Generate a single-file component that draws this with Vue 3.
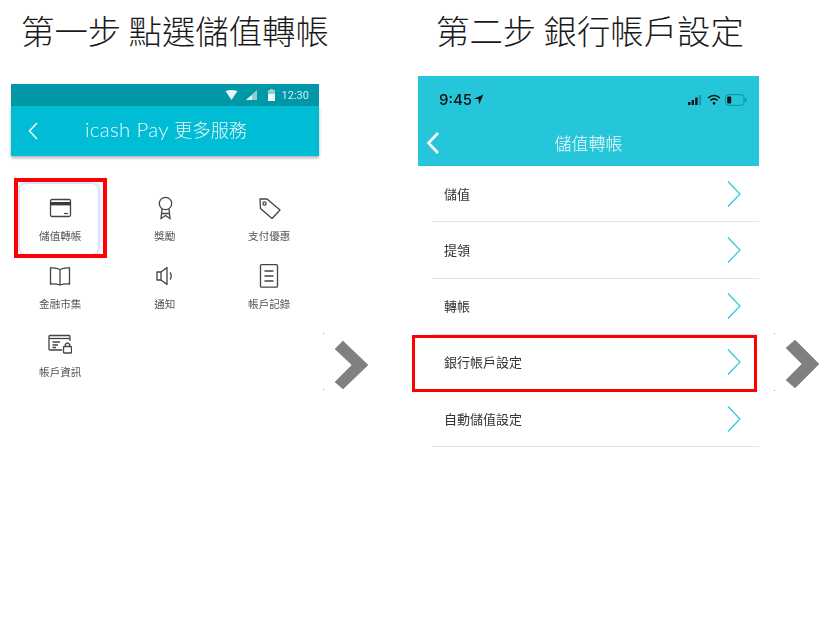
<script setup>
const services = [
  { label: '儲值轉帳', icon: 'card', active: true },
  { label: '獎勵', icon: 'medal' },
  { label: '支付優惠', icon: 'tag' },
  { label: '金融市集', icon: 'book' },
  { label: '通知', icon: 'speaker' },
  { label: '帳戶記錄', icon: 'doc' },
  { label: '帳戶資訊', icon: 'lock' },
]
const rows = [
  { label: '儲值' },
  { label: '提領' },
  { label: '轉帳' },
  { label: '銀行帳戶設定', active: true },
  { label: '自動儲值設定' },
]
</script>

<template>
  <div class="page">
    <section class="col col-one">
      <h1 class="title">第一步 點選儲值轉帳</h1>
      <div class="phone">
        <div class="android-status">
          <svg width="13" height="10" viewBox="0 0 13 10"><path d="M0.5 1 Q6.5 -1 12.5 1 L6.5 10 Z" fill="#e6f6f8" /></svg>
          <svg class="sig" width="12" height="10" viewBox="0 0 12 10"><path d="M0 10 L11 0 V10 Z" fill="#8fd0d8" /><path d="M0 10 L6 5 V10 Z" fill="#e6f6f8" /></svg>
          <svg class="bat" width="7" height="12" viewBox="0 0 7 12"><path d="M2 0 H5 V1 H7 V12 H0 V1 H2 Z" fill="#8fd0d8" /><rect y="5" width="7" height="7" fill="#f2fbfc" /></svg>
          <span class="clock">12:30</span>
        </div>
        <div class="android-head">
          <svg class="back" width="12" height="20" viewBox="0 0 12 20"><path d="M10 2 L2.5 10 L10 18" fill="none" stroke="#eefafc" stroke-width="1.6" /></svg>
          <span class="android-title">icash Pay <span class="android-cjk">更多服務</span></span>
        </div>
        <div class="grid">
          <div v-for="s in services" :key="s.label" class="cell" :class="{ active: s.active }">
            <svg class="ico" width="24" height="24" viewBox="0 0 24 24" fill="none" stroke="#444" stroke-width="1.3">
              <template v-if="s.icon === 'card'">
                <rect x="2.5" y="3.5" width="20" height="17" rx="1.5" />
                <rect x="2.5" y="6" width="20" height="3.4" fill="#3a3a3a" stroke="none" />
                <path d="M16 17.5 H20" stroke-width="1.2" />
              </template>
              <template v-if="s.icon === 'medal'">
                <circle cx="12.5" cy="7.5" r="6.2" />
                <path d="M9 13 L8 22.5 L12.5 19.5 L17 22.5 L16 13 M8.5 17.5 H16.5" />
              </template>
              <template v-if="s.icon === 'tag'">
                <path d="M3 3 H10 L23 14 L15 22.5 L3.5 12.5 Z" stroke-linejoin="round" />
                <circle cx="7.5" cy="7.5" r="1.6" />
              </template>
              <template v-if="s.icon === 'book'">
                <path d="M12 5.5 Q8 3.5 2.5 4 V20 Q8 19.5 12 21 Q16 19.5 21.5 20 V4 Q16 3.5 12 5.5 V21" />
              </template>
              <template v-if="s.icon === 'speaker'">
                <path d="M4 8 H8 L14 3.5 V20.5 L8 16 H4 Z M8 8 V16" stroke-linejoin="round" />
                <path d="M17 8.5 Q19.5 12 17 15.5" />
              </template>
              <template v-if="s.icon === 'doc'">
                <rect x="3.5" y="0.7" width="17" height="22.5" rx="1.2" />
                <path d="M7.5 7 H16.5 M7.5 12 H16.5 M7.5 17 H16.5" />
              </template>
              <template v-if="s.icon === 'lock'">
                <path d="M22 9 V4.5 Q22 3.5 21 3.5 H2 Q1 3.5 1 4.5 V17 Q1 18 2 18 H14" />
                <path d="M1 6.5 H22" />
                <path d="M4.5 10 H12 M4.5 13 H10 M4.5 15.5 H8" />
                <rect x="15.5" y="14.5" width="8" height="6.5" rx="0.8" fill="#fff" />
                <path d="M17.3 14.5 V12.5 Q19.5 9.5 21.7 12.5 V14.5" />
              </template>
            </svg>
            <span class="cell-label">{{ s.label }}</span>
          </div>
        </div>
      </div>
    </section>

    <div class="gap gap-one">
      <svg width="48" height="60" viewBox="0 0 48 60">
        <path class="soft" d="M21 9 L46 33 L21 57 L13 50 L30 33 L13 17 Z" fill="#808080" stroke="#808080" stroke-width="0.6" stroke-linejoin="round" />
        <rect x="1" y="1" width="1" height="1" fill="#999" />
        <rect x="1" y="57" width="1" height="1" fill="#999" />
      </svg>
    </div>

    <section class="col col-two">
      <h1 class="title title-two">第二步 銀行帳戶設定</h1>
      <div class="ios-head">
        <div class="ios-status">
          <span class="ios-time">9:45</span>
          <svg class="ios-loc" width="11" height="11" viewBox="0 0 10 10"><path d="M9.5 0.5 L0.5 4.5 H5 L5.5 9.5 Z" fill="#111" /></svg>
          <span class="ios-spacer"></span>
          <svg width="15" height="10" viewBox="0 0 15 10"><rect x="0" y="7" width="2.4" height="3" fill="#111" /><rect x="3.6" y="5" width="2.4" height="5" fill="#111" /><rect x="7.2" y="2.5" width="2.4" height="7.5" fill="#111" /><rect x="10.8" y="0" width="2.4" height="10" fill="#1a97a8" /></svg>
          <svg width="14" height="11" viewBox="0 0 14 11" fill="none" stroke="#111" stroke-width="1.6"><path d="M1 4 Q7 -1 13 4" /><path d="M3.5 6.3 Q7 3.3 10.5 6.3" /><path d="M6 8.5 L7 9.8 L8 8.5" fill="#111" /></svg>
          <svg width="22" height="12" viewBox="0 0 22 12"><rect x="0.5" y="0.7" width="18.5" height="10.6" rx="2.6" fill="none" stroke="#1a8c9c" /><rect x="2.2" y="2.5" width="4" height="7" rx="1" fill="#111" /><rect x="20" y="4" width="1.3" height="4" fill="#1a8c9c" /></svg>
        </div>
        <div class="ios-nav">
          <svg class="ios-back" width="14" height="24" viewBox="0 0 14 24"><path d="M12 2 L2.5 12 L12 22" fill="none" stroke="#fff" stroke-width="2.6" /></svg>
          <span class="ios-title">儲值轉帳</span>
        </div>
      </div>
      <ul class="list">
        <li v-for="r in rows" :key="r.label" class="row" :class="{ active: r.active }">
          <span class="row-label">{{ r.label }}</span>
          <svg width="14" height="28" viewBox="0 0 14 28"><path d="M1 1.5 L13 14 L1 26.5" fill="none" stroke="#2ec7dc" stroke-width="1.2" /></svg>
        </li>
      </ul>
    </section>

    <div class="gap gap-two">
      <svg width="48" height="60" viewBox="0 0 48 60">
        <path class="soft" d="M22 8 L46 32 L22 56 L13 48 L29 32 L13 16 Z" fill="#808080" stroke="#808080" stroke-width="0.6" stroke-linejoin="round" />
        <rect x="1" y="1" width="1" height="1" fill="#999" />
        <rect x="1" y="58" width="1" height="1" fill="#999" />
      </svg>
    </div>
  </div>
</template>

<style scoped>
.page {
  width: 823px;
  height: 633px;
  overflow: hidden;
  display: flex;
  padding-left: 11px;
  box-sizing: border-box;
  background: #fff;
  font-family: "Noto Sans CJK TC", "Noto Sans", sans-serif;
}
.col-one { width: 308px; flex: none; }
.col-two { width: 341px; flex: none; }
.title {
  margin: 0 0 0 10px;
  height: 64px;
  line-height: 60px;
  font-size: 33.4px;
  font-weight: 300;
  color: #1a1a1a;
  white-space: nowrap;
}
.title-two { margin-left: 18px; margin-bottom: 12px; }
.col-one .title { margin-bottom: 20px; }

.android-status {
  height: 22px;
  background: #0097a7;
  display: flex;
  align-items: center;
  justify-content: flex-end;
  padding-right: 10px;
  filter: blur(0.4px);
}
.sig { margin-left: 8px; }
.bat { margin-left: 10px; }
.clock {
  margin-left: 7px;
  font: 400 11px Roboto, sans-serif;
  color: #cdeef2;
}
.android-head {
  height: 50px;
  background: #00bcd4;
  box-shadow: 0 2px 3px rgba(0, 0, 0, 0.3);
  display: flex;
  align-items: center;
  position: relative;
}
.back { margin-left: 16px; filter: blur(0.3px); }
.android-title {
  margin-left: 46px;
  margin-bottom: 5px;
  font: 300 20.5px Lato, "Noto Sans CJK TC", sans-serif;
  color: #eefafc;
  letter-spacing: 0.3px;
  white-space: nowrap;
  filter: blur(0.3px);
}
.android-cjk { font-size: 18.2px; letter-spacing: 0; }
.grid {
  margin: 40px 0 0 -3px;
  display: grid;
  grid-template-columns: repeat(3, 104.5px);
  grid-auto-rows: 68px;
}
.cell {
  position: relative;
  display: flex;
  flex-direction: column;
  align-items: center;
}
.ico { position: relative; z-index: 1; filter: blur(0.35px); }
.cell-label {
  position: relative;
  z-index: 1;
  margin-top: 8px;
  font-size: 10.6px;
  line-height: 16px;
  color: #555;
  white-space: nowrap;
  filter: blur(0.3px);
}
.cell.active::before {
  content: "";
  position: absolute;
  left: 12px;
  top: -12px;
  width: 78px;
  height: 70px;
  background: #fff;
  border-radius: 6px;
  box-shadow: 0 0 5px 1px rgba(130, 170, 255, 0.65);
}
.cell.active::after {
  content: "";
  position: absolute;
  left: 6px;
  top: -18px;
  width: 93px;
  height: 80px;
  box-sizing: border-box;
  border: 4px solid #f00;
  z-index: 2;
}

.ios-head { background: #26c6da; height: 90px; }
.ios-status {
  height: 47px;
  display: flex;
  align-items: center;
  gap: 4px;
  padding: 0 12px 0 21px;
  filter: blur(0.3px);
}
.ios-time {
  font: 500 15px Inter, sans-serif;
  color: #111;
}
.ios-loc { margin-left: -3px; }
.ios-spacer { flex: 1; }
.ios-nav {
  height: 43px;
  position: relative;
  display: flex;
  align-items: center;
  justify-content: center;
}
.ios-back { position: absolute; left: 8px; top: 8px; }
.ios-title { font-size: 17px; font-weight: 300; color: #f4fdfe; margin-bottom: 4px; filter: blur(0.3px); }

.list { margin: 0 0 0 14px; padding: 0; list-style: none; }
.row {
  height: 56.25px;
  box-sizing: border-box;
  border-bottom: 1px solid #e4e4e4;
  padding: 0 18px 0 12px;
  display: flex;
  align-items: center;
  justify-content: space-between;
  position: relative;
}
.row-label { font-size: 13px; color: #333; margin-bottom: 1px; filter: blur(0.3px); }
.row.active::after {
  content: "";
  position: absolute;
  left: -20px;
  top: 0;
  width: 345px;
  height: 57px;
  box-sizing: border-box;
  border: 3.5px solid #f00;
}
.gap { flex: none; padding-top: 332px; box-sizing: border-box; height: 633px; }
.gap svg { display: block; }
.soft { filter: blur(0.5px); }
.gap-one { width: 99px; padding-left: 3px; }
.gap-two { width: 64px; padding-left: 14px; }
</style>
